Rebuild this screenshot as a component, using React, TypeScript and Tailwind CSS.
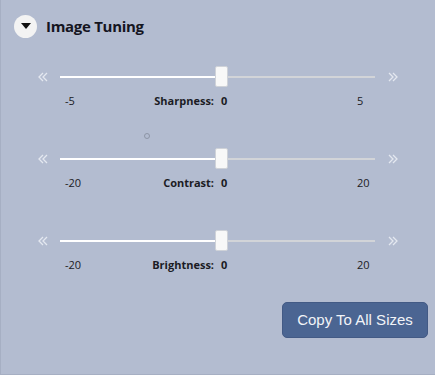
import React from 'react'

const sliders = [
  { name: 'Sharpness', min: -5, max: 5, value: 0 },
  { name: 'Contrast', min: -20, max: 20, value: 0 },
  { name: 'Brightness', min: -20, max: 20, value: 0 }
]

function Chevrons({ dir }: { dir: 'left' | 'right' }) {
  const pts = dir === 'left' ? ['5,1 1,5 5,9', '9,1 5,5 9,9'] : ['1,1 5,5 1,9', '5,1 9,5 5,9']
  return (
    <svg width="10" height="10" viewBox="0 0 10 10" fill="none" stroke="#e4e8f0" strokeWidth="1.3">
      {pts.map(p => (
        <polyline key={p} points={p} />
      ))}
    </svg>
  )
}

function SliderRow({ name, min, max, value }: { name: string; min: number; max: number; value: number }) {
  return (
    <div className="flex flex-col">
      <div className="flex items-center h-[22px]">
        <div className="w-[59px] flex justify-end pr-[12px]">
          <Chevrons dir="left" />
        </div>
        <div className="relative w-[315px] h-[22px] flex items-center">
          <div className="h-[2px] w-[155px] bg-white" />
          <div className="h-[2px] flex-1 bg-[#d2d4d8]" />
          <div className="absolute left-[155px] top-0 w-[13px] h-[21px] bg-[#f8f8f8] border border-[#cfd2d8] rounded-[2px]" />
        </div>
        <div className="pl-[13px]">
          <Chevrons dir="right" />
        </div>
      </div>
      <div className="flex items-center mt-[5px] ml-[64px] text-[11px] leading-[16px] text-[#1b1b24]">
        <div className="w-[149px] flex justify-between">
          <span>{min}</span>
          <span className="font-bold">{name}:</span>
        </div>
        <span className="ml-[7px] w-[136px] font-bold">{value}</span>
        <span>{max}</span>
      </div>
    </div>
  )
}

export default function App() {
  return (
    <div
      className="relative w-[435px] h-[375px] bg-[#b3bcd0] border-l border-b border-[#a6afc3] overflow-hidden"
      style={{ fontFamily: '"Open Sans", "Noto Sans", sans-serif' }}
    >
      <div className="flex items-center pt-[15px] pl-[13px]">
        <div className="w-[23px] h-[23px] rounded-full bg-[#f3f3f3] flex items-center justify-center">
          <svg width="10" height="7" viewBox="0 0 10 7">
            <polygon points="0,0 10,0 5,6" fill="#111" />
          </svg>
        </div>
        <span className="ml-[9px] text-[15px] font-bold text-[#15151f] tracking-[-0.3px]">Image Tuning</span>
      </div>

      <div className="flex flex-col gap-[39px] mt-[28px]">
        {sliders.map(s => (
          <SliderRow key={s.name} {...s} />
        ))}
      </div>

      <div className="absolute left-[143px] top-[133px] w-[6px] h-[6px] rounded-full border border-[#8d95a6]" />

      <div className="flex justify-end pr-[7px] mt-[29px]">
        <button
          className="w-[146px] h-[36px] rounded-[5px] bg-[#4b6592] border border-[#435a85] text-[#f2f4f8] text-[15px]"
          style={{ fontFamily: '"Liberation Sans", Arial, sans-serif' }}
        >
          Copy To All Sizes
        </button>
      </div>
    </div>
  )
}
